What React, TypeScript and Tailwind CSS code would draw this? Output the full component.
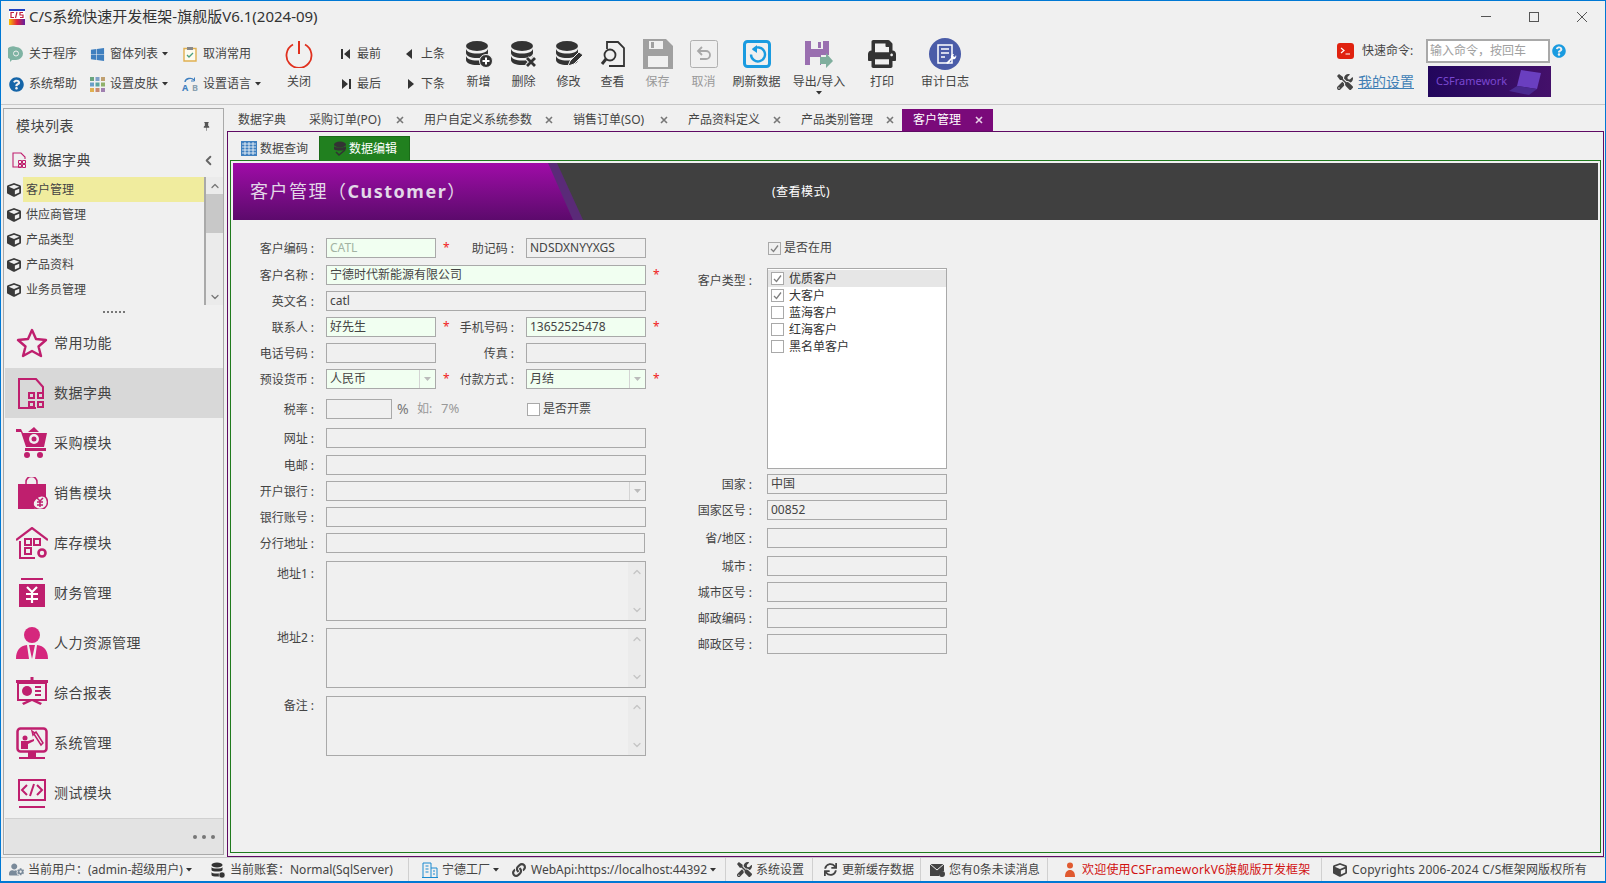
import React from "react";
import { ChevronDown, ChevronLeft, ChevronUp } from "lucide-react";
import {
  FaCube,
  FaLink,
  FaPrint,
  FaQuestionCircle,
  FaSync,
  FaTools,
  FaUserCog,
  FaWindows,
} from "react-icons/fa";
import { BsPinFill } from "react-icons/bs";

const PINK = "#bf1f6e";

const Caret = ({ className = "" }: { className?: string }) => (
  <svg viewBox="0 0 6 4" className={`w-[6px] h-1 ${className}`}>
    <path d="M0 0h6L3 3.5z" fill="#333" />
  </svg>
);

const MiniBtn = ({ icon, label, caret }: { icon: React.ReactNode; label: string; caret?: boolean }) => (
  <div className="flex items-center h-[30px]">
    <span className="relative w-4 h-4 flex items-center justify-center">{icon}</span>
    <span className="ml-[5px] text-xs text-[#444]">{label}</span>
    {caret && <Caret className="ml-[4px]" />}
  </div>
);

const NavBtn = ({ d, label, w }: { d: string; label: string; w: string }) => (
  <div className={`flex items-center h-[30px] ${w}`}>
    <svg viewBox="0 0 12 12" className="w-3 h-3">
      <path d={d} fill="#333" />
    </svg>
    <span className="ml-[5px] text-xs text-[#444]">{label}</span>
  </div>
);

const BigBtn = ({ icon, label, w, muted }: { icon: React.ReactNode; label: string; w: string; muted?: boolean }) => (
  <div className={`flex flex-col items-center ${w}`}>
    <div className="h-[32px] flex items-center justify-center">{icon}</div>
    <span className={`mt-[4px] text-xs ${muted ? "text-[#999]" : "text-[#444]"}`}>{label}</span>
  </div>
);

const DbIcon = ({ children }: { children?: React.ReactNode }) => (
  <svg viewBox="0 0 28 28" className="w-7 h-7">
    <g fill="#333">
      <ellipse cx="12" cy="6" rx="11" ry="5" />
      <path d="M1 8.5c0 3 5 5 11 5s11-2 11-5v4.5c0 3-5 5-11 5s-11-2-11-5z" />
      <path d="M1 15.5c0 3 5 5 11 5s11-2 11-5v4.5c0 3-5 5-11 5s-11-2-11-5z" />
    </g>
    {children}
  </svg>
);

const NavIcon = ({ children }: { children: React.ReactNode }) => (
  <svg viewBox="0 0 32 32" className="w-8 h-8" fill={PINK}>
    {children}
  </svg>
);

const navItems: { label: string; active?: boolean; icon: React.ReactNode }[] = [
  {
    label: "常用功能",
    icon: (
      <NavIcon>
        <path d="M16 3l4 9 10 1-7.500 6.500L25 29l-9-5-9 5 2.500-9.500L2 13l10-1z" fill="none" stroke={PINK} strokeWidth="2.400" strokeLinejoin="round" />
      </NavIcon>
    ),
  },
  {
    label: "数据字典",
    active: true,
    icon: (
      <NavIcon>
        <path d="M20 31H3V2h17l7 8v5" fill="none" stroke={PINK} strokeWidth="2" />
        <path d="M12 15h7v7h-7zM14 17v3h3v-3zM21 15h7v7h-7zM23 17v3h3v-3zM12 24h7v7h-7zM14 26v3h3v-3zM21 24h7v7h-7zM23 26v3h3v-3z" fillRule="evenodd" />
      </NavIcon>
    ),
  },
  {
    label: "采购模块",
    icon: (
      <NavIcon>
        <path d="M0 2h5l2 4h24l-3 14H10L5 5H0z" />
        <path d="M9 21h21v3H9z" />
        <circle cx="11" cy="28" r="3" />
        <circle cx="24" cy="28" r="3" />
        <circle cx="18" cy="12" r="5" fill="#f0f0f0" />
        <circle cx="18" cy="12" r="2.500" />
        <path d="M12 5l6-5 5 5z" />
      </NavIcon>
    ),
  },
  {
    label: "销售模块",
    icon: (
      <NavIcon>
        <path d="M2 7h28v14a8 8 0 0 0-11 11H2z" />
        <path d="M10 8V5a5 5 0 0 1 11 0v3" fill="none" stroke={PINK} strokeWidth="1.500" />
        <circle cx="24" cy="25" r="7.500" fill="none" stroke={PINK} strokeWidth="1.500" />
        <path d="M21 21l3 3 3-3M21 25h6M21 28h6M24 24v6" fill="none" stroke={PINK} strokeWidth="1.500" />
      </NavIcon>
    ),
  },
  {
    label: "库存模块",
    icon: (
      <NavIcon>
        <path d="M0 13L16 1l16 12" fill="none" stroke={PINK} strokeWidth="2.200" />
        <path d="M4 14v17h15" fill="none" stroke={PINK} strokeWidth="2" />
        <path d="M9 12h6v6H9zM18 12h6v6h-6zM9 21h6v6H9z" fill="none" stroke={PINK} strokeWidth="2" />
        <circle cx="26" cy="26" r="3.500" fill="none" stroke={PINK} strokeWidth="2.600" />
      </NavIcon>
    ),
  },
  {
    label: "财务管理",
    icon: (
      <NavIcon>
        <path d="M5 1h22v2H5z" />
        <path d="M3 7h26v23H3z" />
        <path d="M11 10l5 5 5-5M10 17h12M10 22h12M16 15v11" fill="none" stroke="#fff" strokeWidth="2.200" />
      </NavIcon>
    ),
  },
  {
    label: "人力资源管理",
    icon: (
      <NavIcon>
        <circle cx="16" cy="8" r="8" fill="#d5277d" />
        <path d="M0 32c0-9 4-13 11-14l2 14zM32 32c0-9-4-13-11-14l-2 14zM13 18h6l-3 14z" fill="#d5277d" />
      </NavIcon>
    ),
  },
  {
    label: "综合报表",
    icon: (
      <NavIcon>
        <path d="M14.500 0h3v3h-3zM0 3h32v3H0z" />
        <path d="M2 6h28v17H2z" fill="none" stroke={PINK} strokeWidth="2" />
        <path d="M6 26l9-4h2l9 4-1.500 2L16 24l-8.500 4z" />
        <circle cx="11" cy="14" r="5" />
        <path d="M19 9h6v2h-6zM19 13h6v2h-6zM19 17h6v2h-6z" />
      </NavIcon>
    ),
  },
  {
    label: "系统管理",
    icon: (
      <NavIcon>
        <rect x="1.500" y="1.500" width="29" height="23" rx="3" fill="none" stroke={PINK} strokeWidth="2.500" />
        <path d="M3 32h26v-2H3zM12 25h8v5h-8z" />
        <circle cx="9" cy="11" r="2.500" />
        <path d="M5 14h7l6-2v2l-6 3v5H5z" />
        <path d="M16 4l3 2 1-1 7 11-2 2-7-11-1 1z" fill="none" stroke={PINK} strokeWidth="1.500" />
      </NavIcon>
    ),
  },
  {
    label: "测试模块",
    icon: (
      <NavIcon>
        <path d="M3 3h26v20H3z" fill="none" stroke={PINK} strokeWidth="2" />
        <path d="M3 29h26v2H3z" />
        <path d="M11 8l-5 5 5 5M21 8l5 5-5 5M18 7l-4 12" fill="none" stroke={PINK} strokeWidth="2" />
      </NavIcon>
    ),
  },
];

const tabs = [
  { label: "数据字典", w: "w-[71px]" },
  { label: "采购订单(PO)", w: "w-[115px]", close: "left-[98px]" },
  { label: "用户自定义系统参数", w: "w-[149px]", close: "left-[132px]" },
  { label: "销售订单(SO)", w: "w-[115px]", close: "left-[98px]" },
  { label: "产品资料定义", w: "w-[113px]", close: "left-[96px]" },
  { label: "产品类别管理", w: "w-[112px]", close: "left-[96px]" },
];

const TabClose = ({ className }: { className: string }) => (
  <svg viewBox="0 0 8 8" className={`absolute top-[7px] w-2 h-2 ${className}`}>
    <path d="M1 1l6 6M7 1L1 7" stroke="currentColor" strokeWidth="1.600" />
  </svg>
);

const Label = ({ text, w }: { text: string; w: string }) => (
  <span className={`${w} pt-[2px] text-right text-xs text-[#444] shrink-0`}>
    {text}
    <span className="ml-[3px]">:</span>
  </span>
);

const Star = ({ w }: { w: string }) => (
  <span className={`${w} pl-[7px] text-xs text-[#f02020] leading-none shrink-0`}>*</span>
);

const Input = ({
  w,
  value,
  req,
  select,
  muted,
  ml,
}: {
  w: string;
  value?: string;
  req?: boolean;
  select?: boolean;
  muted?: boolean;
  ml?: string;
}) => (
  <div
    className={`${w} ${ml ?? "ml-3"} h-5 shrink-0 border border-[#a9a9a9] flex items-center text-xs ${
      req ? "bg-[#f1fff1]" : "bg-[#f0f0f0]"
    } ${muted ? "text-[#a3b3a3]" : "text-[#444]"}`}
  >
    <span className="flex-1 pl-[3px] whitespace-nowrap">{value}</span>
    {select && (
      <span className="w-[16px] h-full border-l border-[#d4d4d4] flex items-center justify-center">
        <svg viewBox="0 0 7 4" className="w-[7px] h-1">
          <path d="M0 0h7L3.500 4z" fill="#bbb" />
        </svg>
      </span>
    )}
  </div>
);

const Area = ({ w = "w-[320px]" }: { w?: string }) => (
  <div className={`${w} ml-3 h-[60px] border border-[#a9a9a9] flex justify-end`}>
    <div className="w-[17px] bg-[#ebebeb] flex flex-col justify-between items-center py-[4px]">
      <ChevronUp size={12} color="#c5c5c5" strokeWidth={2.500} />
      <ChevronDown size={12} color="#c5c5c5" strokeWidth={2.500} />
    </div>
  </div>
);

const Check = ({ checked, white }: { checked?: boolean; white?: boolean }) => (
  <span
    className={`w-[13px] h-[13px] shrink-0 border border-[#a9a9a9] flex items-center justify-center ${
      white || !checked ? "bg-white" : "bg-[#f0f0f0]"
    }`}
  >
    {checked && (
      <svg viewBox="0 0 11 11" className="w-[11px] h-[11px]">
        <path d="M2 6l2.500 2.500L9 2.500" fill="none" stroke="#808080" strokeWidth="1.300" />
      </svg>
    )}
  </span>
);

const customerTypes = [
  { label: "优质客户", checked: true, hl: true },
  { label: "大客户", checked: true },
  { label: "蓝海客户" },
  { label: "红海客户" },
  { label: "黑名单客户" },
];

const StatusItem = ({
  icon,
  label,
  w,
  caret,
  red,
  sep,
  wide,
}: {
  icon: React.ReactNode;
  label: string;
  w: string;
  caret?: boolean;
  red?: boolean;
  sep?: boolean;
  wide?: boolean;
}) => (
  <div className={`${w} h-full flex items-center shrink-0 ${sep ? "border-r border-[#d0d0d0]" : ""}`}>
    <span className="w-4 h-4 flex items-center justify-center shrink-0">{icon}</span>
    <span
      className={`ml-[4px] text-xs whitespace-nowrap ${wide ? "tracking-[0.2px]" : ""} ${
        red ? "text-[#d01010]" : "text-[#444]"
      }`}
    >
      {label}
    </span>
    {caret && <Caret className="ml-[3px]" />}
  </div>
);

export default function App() {
  return (
    <div className="w-[1606px] h-[883px] bg-[#f0f0f0] border-x border-t border-b-2 border-[#0078d4] flex flex-col overflow-hidden [font-family:'Noto_Sans','Noto_Sans_CJK_SC',sans-serif]">
      {/* title bar */}
      <div className="h-[31px] flex items-center shrink-0">
        <svg viewBox="0 0 16 16" className="w-4 h-4 ml-2">
          <defs>
            <linearGradient id="logoBar" x1="0" x2="1" y1="0" y2="0">
              <stop offset="0" stopColor="#f7c000" />
              <stop offset="0.500" stopColor="#e02040" />
              <stop offset="1" stopColor="#6020a0" />
            </linearGradient>
          </defs>
          <rect width="16" height="2" fill="#2040c0" />
          <rect y="2" width="16" height="8" fill="#fff" />
          <rect y="10" width="16" height="6" fill="url(#logoBar)" />
          <path d="M5 3.500H2v5h3M8 3l-1.500 6M14 3.500h-3v2.500h3v2.500h-3" fill="none" stroke="#c02040" strokeWidth="1.200" />
        </svg>
        <span className="ml-[4px] text-[15px] text-[#333]">C/S系统快速开发框架-旗舰版V6.1(2024-09)</span>
        <div className="ml-auto flex h-full">
          <div className="w-12 flex items-center justify-center">
            <div className="w-[10px] h-px bg-[#555]" />
          </div>
          <div className="w-12 flex items-center justify-center">
            <div className="w-[10px] h-[10px] border border-[#555]" />
          </div>
          <div className="w-[47px] flex items-center justify-center">
            <svg viewBox="0 0 10 10" className="w-[10px] h-[10px]">
              <path d="M0 0l10 10M10 0L0 10" stroke="#555" />
            </svg>
          </div>
        </div>
      </div>

      {/* ribbon */}
      <div className="h-[73px] shrink-0 border-b border-[#c8c8c8] pt-[6px] pl-[7px] flex">
        <div className="w-[81px] mt-[1px] flex flex-col">
          <MiniBtn
            label="关于程序"
            icon={
              <svg viewBox="0 0 16 16" className="w-4 h-4">
                <path d="M8 1a7 6.500 0 0 1 0 13H4l-2 2v-3a7 6.500 0 0 1 6-12z" fill="#7fb3a3" />
                <circle cx="8" cy="7.500" r="2.500" fill="none" stroke="#f0f0f0" />
              </svg>
            }
          />
          <MiniBtn label="系统帮助" icon={<FaQuestionCircle size={15} color="#1565a8" />} />
        </div>
        <div className="w-[93px] mt-[1px] flex flex-col">
          <MiniBtn label="窗体列表" caret icon={<FaWindows size={15} color="#3f7fbf" />} />
          <MiniBtn
            label="设置皮肤"
            caret
            icon={
              <svg viewBox="0 0 15 15" className="w-[15px] h-[15px]">
                <path d="M0 0h4v4H0z" fill="#6aa57f" />
                <path d="M5.500 0h4v4h-4z" fill="#7f9fc8" />
                <path d="M11 0h4v4h-4z" fill="#c0a070" />
                <path d="M0 5.500h4v4H0z" fill="#6a9fc8" />
                <path d="M5.500 5.500h4v4h-4z" fill="#5aa5a0" />
                <path d="M11 5.500h4v4h-4z" fill="#8fb06a" />
                <path d="M0 11h4v4H0z" fill="#e0b050" />
                <path d="M5.500 11h4v4h-4z" fill="#c88a70" />
                <path d="M11 11h4v4h-4z" fill="#a080b0" />
              </svg>
            }
          />
        </div>
        <div className="w-[92px] mt-[1px] flex flex-col">
          <MiniBtn
            label="取消常用"
            icon={
              <svg viewBox="0 0 14 16" className="w-[14px] h-4">
                <path d="M1 2.500h12V15H1z" fill="#fdfbf0" stroke="#e0b050" strokeWidth="1.400" />
                <path d="M4 1h6v3H4z" fill="#888" />
                <path d="M4 9l2 2 4-4" fill="none" stroke="#4aa080" strokeWidth="1.300" />
              </svg>
            }
          />
          <MiniBtn
            label="设置语言"
            caret
            icon={
              <>
                <svg viewBox="0 0 16 16" className="w-4 h-4">
                  <path d="M3 6a5 4 0 0 1 9-2" fill="none" stroke="#3f7fbf" strokeWidth="1.400" />
                  <path d="M12.500 1.500v3.500H9" fill="none" stroke="#3f7fbf" />
                </svg>
                <span className="absolute left-0 top-[7px] flex w-4 justify-between text-[9px] leading-[9px] font-bold">
                  <span className="text-[#3f7fbf]">A</span>
                  <span className="text-[#8aa0b0]">B</span>
                </span>
              </>
            }
          />
        </div>
        <BigBtn
          w="w-[50px]"
          label="关闭"
          icon={
            <svg viewBox="0 0 28 28" className="w-7 h-7">
              <path d="M8 4.500a12.500 12.500 0 1 0 12 0" fill="none" stroke="#e0301e" strokeWidth="1.800" />
              <path d="M14 1v13" stroke="#e0301e" strokeWidth="2" />
            </svg>
          }
        />
        <div className="w-[64px] mt-[1px] pl-[16px] flex flex-col">
          <NavBtn w="" label="最前" d="M1 1h2v10H1zM10 1v10L4 6z" />
          <NavBtn w="" label="最后" d="M9 1h2v10H9zM2 1v10l6-5z" />
        </div>
        <div className="w-[68px] mt-[1px] pl-[16px] flex flex-col">
          <NavBtn w="" label="上条" d="M8 1v10L2 6z" />
          <NavBtn w="" label="下条" d="M4 1v10l6-5z" />
        </div>
        <BigBtn
          w="w-[45px]"
          label="新增"
          icon={
            <DbIcon>
              <circle cx="21" cy="21" r="6.500" fill="#333" stroke="#f0f0f0" />
              <path d="M21 17.500v7M17.500 21h7" stroke="#fff" strokeWidth="2" />
            </DbIcon>
          }
        />
        <BigBtn
          w="w-[45px]"
          label="删除"
          icon={
            <DbIcon>
              <path d="M17 18l8 8M25 18l-8 8" stroke="#f0f0f0" strokeWidth="5" />
              <path d="M17 18l8 8M25 18l-8 8" stroke="#333" strokeWidth="2.800" />
            </DbIcon>
          }
        />
        <BigBtn
          w="w-[45px]"
          label="修改"
          icon={
            <DbIcon>
              <path d="M13 26l2-5 9-9 4 3-9 9z" fill="#333" stroke="#f0f0f0" />
            </DbIcon>
          }
        />
        <BigBtn
          w="w-[43px]"
          label="查看"
          icon={
            <svg viewBox="0 0 26 28" className="w-[26px] h-7" fill="none" stroke="#333">
              <path d="M7 9V2h11l6 6v18H9" strokeWidth="1.800" />
              <circle cx="10" cy="15" r="5.500" strokeWidth="1.800" />
              <path d="M6 19l-4 5" strokeWidth="3" />
            </svg>
          }
        />
        <BigBtn
          w="w-[47px]"
          muted
          label="保存"
          icon={
            <svg viewBox="0 0 30 30" className="w-[30px] h-[30px]">
              <path d="M0 0h23l7 7v23H0z" fill="#a0a0a0" />
              <path d="M6 2h14v8H6z" fill="#f0f0f0" />
              <path d="M8 3h3v6H8z" fill="#a0a0a0" />
              <path d="M5 17h20v11H5z" fill="#f0f0f0" />
            </svg>
          }
        />
        <BigBtn
          w="w-[45px]"
          muted
          label="取消"
          icon={
            <svg viewBox="0 0 28 28" className="w-7 h-7" fill="none">
              <rect x="0.500" y="0.500" width="27" height="27" rx="2" stroke="#b0b0b0" />
              <path d="M12 7l-4 4 4 4M8 11h8a4 4 0 0 1 0 8h-6" stroke="#a8a8a8" strokeWidth="1.800" />
            </svg>
          }
        />
        <BigBtn
          w="w-[61px]"
          label="刷新数据"
          icon={
            <svg viewBox="0 0 28 28" className="w-7 h-7" fill="none">
              <rect x="1.500" y="1.500" width="25" height="25" rx="3" stroke="#1a9be0" strokeWidth="3" />
              <path d="M10 9.500a7 7 0 1 1-2 5" stroke="#1a9be0" strokeWidth="2.400" />
              <path d="M14 5l-5 4.500 5 3.500z" fill="#1a9be0" />
            </svg>
          }
        />
        <div className="w-[64px] flex flex-col items-center relative">
          <div className="h-[32px] flex items-center justify-center">
            <svg viewBox="0 0 28 28" className="w-7 h-7">
              <path d="M0 1h24v14h-8v10H0z" fill="#9a6fb0" />
              <path d="M6 1h12v8H6z" fill="#f0f0f0" />
              <path d="M13 2h3v6h-3z" fill="#9a6fb0" />
              <path d="M5 17h10v8H5z" fill="#f0f0f0" />
              <path d="M15 17h6v-4l7 8-7 7v-4h-6z" fill="#7fae9d" />
            </svg>
          </div>
          <span className="mt-[4px] text-xs text-[#444] whitespace-nowrap">导出/导入</span>
          <Caret className="mt-[1px]" />
        </div>
        <BigBtn w="w-[62px]" label="打印" icon={<FaPrint size={28} color="#333" />} />
        <BigBtn
          w="w-[64px]"
          label="审计日志"
          icon={
            <svg viewBox="0 0 32 32" className="w-8 h-8">
              <circle cx="16" cy="16" r="16" fill="#4a5ca8" />
              <path d="M9 7h14v18H9z" fill="none" stroke="#fff" strokeWidth="1.500" />
              <path d="M12 11h8M12 15h8M12 19h4" stroke="#fff" strokeWidth="1.500" />
              <path d="M17 25l5-5a3 3 0 0 1 3-4l-1 2 2 1 1-2a3 3 0 0 1-4 4l-4 5z" fill="#fff" />
            </svg>
          }
        />
        <div className="ml-auto mr-[39px] mt-[1px] flex flex-col">
          <div className="flex items-center h-6">
            <span className="w-[17px] h-[16px] rounded-[3px] bg-[#e0220f] flex items-center justify-center">
              <svg viewBox="0 0 12 10" className="w-3 h-[10px]">
                <path d="M1 2l3 2.500L1 7M5.500 8H10" fill="none" stroke="#fff" strokeWidth="1.200" />
              </svg>
            </span>
            <span className="ml-2 w-[64px] text-xs text-[#444]">快速命令:</span>
            <div className="w-[124px] h-6 border-2 border-[#a9a9a9] bg-white flex items-center pl-[2px] text-xs text-[#a0a0a0] whitespace-nowrap">
              输入命令，按回车
            </div>
            <FaQuestionCircle size={14} color="#1a9be0" className="ml-[2px]" />
          </div>
          <div className="flex items-center mt-[3px] h-[31px]">
            <FaTools size={16} color="#444" />
            <span className="ml-[5px] w-[70px] text-sm tracking-[0] text-[#3f7fb5] underline">我的设置</span>
            <div className="w-[123px] h-[31px] bg-linear-to-r from-[#22065c] to-[#44106a] flex items-center justify-between pl-2 pr-[6px]">
              <span className="text-[11px] text-[#7a48d0]">CSFramework</span>
              <svg viewBox="0 0 36 28" className="w-9 h-7">
                <path d="M12 2l20 3-4 16-20-3z" fill="#6a3fc0" />
                <path d="M8 18l20 3-8 6L0 23z" fill="#4a2a90" />
              </svg>
            </div>
          </div>
        </div>
      </div>

      {/* body */}
      <div className="flex-1 flex min-h-0">
        {/* sidebar */}
        <div className="w-[221px] ml-[2px] mt-[3px] mb-[2px] border border-[#a9a9a9] flex flex-col shrink-0">
          <div className="h-[34px] flex items-center justify-between pl-[12px] pr-[12px]">
            <span className="text-sm tracking-[0.500px] text-[#444]">模块列表</span>
            <BsPinFill size={9} color="#555" />
          </div>
          <div className="h-[34px] flex items-center pl-[8px] pr-[7px]">
            <svg viewBox="0 0 16 16" className="w-4 h-4" fill="none" stroke={PINK}>
              <path d="M9 15H1V1h8l4 4v2" strokeWidth="1.100" />
              <path d="M6.500 8.500h3v3h-3zM10.500 8.500h3v3h-3zM6.500 12.500h3v3h-3zM10.500 12.500h3v3h-3z" strokeWidth="1" />
            </svg>
            <span className="ml-[5px] text-sm tracking-[0.500px] text-[#444]">数据字典</span>
            <ChevronLeft size={15} color="#666" strokeWidth={3} className="ml-auto" />
          </div>
          <div className="h-[128px] flex">
            <div className="flex-1 flex flex-col pl-[3px]">
              {["客户管理", "供应商管理", "产品类型", "产品资料", "业务员管理"].map((t, i) => (
                <div key={t} className="h-[25px] flex items-center">
                  <FaCube size={14} color="#3a3a3a" />
                  <span className={`ml-[2px] flex-1 h-full flex items-center pl-[3px] pt-px text-xs text-[#444] ${i === 0 ? "bg-[#f0ec9e]" : ""}`}>
                    {t}
                  </span>
                </div>
              ))}
            </div>
            <div className="w-[19px] border-l-2 border-[#a9a9a9] bg-[#ebebeb] flex flex-col items-center">
              <div className="h-[17px] flex items-center">
                <ChevronUp size={12} color="#777" strokeWidth={2.500} />
              </div>
              <div className="w-full h-[39px] bg-[#c8c8c8]" />
              <div className="mt-auto h-[17px] flex items-center">
                <ChevronDown size={12} color="#777" strokeWidth={2.500} />
              </div>
            </div>
          </div>
          <div className="h-[13px] flex justify-center gap-[2px] pt-[6px]">
            {[0, 1, 2, 3, 4, 5].map((i) => (
              <span key={i} className="w-[2px] h-[2px] bg-[#777]" />
            ))}
          </div>
          <div className="flex flex-col pl-px">
            {navItems.map((n) => (
              <div key={n.label} className={`h-[50px] flex items-center pl-[11px] ${n.active ? "bg-[#d8d8d8]" : ""}`}>
                {n.icon}
                <span className="ml-[6px] text-sm tracking-[0.500px] text-[#444]">{n.label}</span>
              </div>
            ))}
          </div>
          <div className="flex-1 ml-px bg-[#e3e3e3] border-t border-[#d0d0d0] flex items-center justify-end gap-[5px] pr-[8px]">
            {[0, 1, 2].map((i) => (
              <span key={i} className="w-1 h-1 rounded-full bg-[#777]" />
            ))}
          </div>
        </div>

        {/* main */}
        <div className="flex-1 flex flex-col min-w-0 pl-[3px] pr-[1px] pb-0">
          <div className="h-[26px] pt-[4px] flex shrink-0">
            {tabs.map((t) => (
              <div key={t.label} className={`${t.w} relative h-[22px] pl-[11px] flex items-center text-xs text-[#444] whitespace-nowrap`}>
                {t.label}
                {t.close && <TabClose className={`${t.close} text-[#777]`} />}
              </div>
            ))}
            <div className="w-[91px] relative h-[22px] pl-[11px] flex items-center bg-[#7a0a7a] text-xs text-white">
              客户管理
              <TabClose className="left-[73px] text-[#e8d0e8]" />
            </div>
          </div>
          <div className="flex-1 min-h-0 border border-[#5f0a64] pt-[4px] px-[2px] pb-[3px] flex flex-col">
            <div className="h-6 flex shrink-0">
              <div className="w-[89px] pl-[11px] pt-px flex items-center text-xs text-[#444]">
                <svg viewBox="0 0 16 15" className="w-4 h-[15px]">
                  <path d="M0 0h16v15H0z" fill="#3f7fbf" />
                  <path d="M1 3h14M1 6h14M1 9h14M1 12h14M4 1v13M8 1v13M12 1v13" stroke="#fff" strokeWidth="0.800" />
                </svg>
                <span className="ml-[3px]">数据查询</span>
              </div>
              <div className="w-[91px] pl-[13px] pt-px flex items-center bg-[#21801f] border-x border-t border-[#1a6a18] text-xs text-white">
                <svg viewBox="0 0 16 16" className="w-4 h-4">
                  <ellipse cx="7" cy="3.500" rx="6" ry="3" fill="#333" />
                  <path d="M1 5c0 2 12 2 12 0v3c0 2-12 2-12 0z" fill="#333" />
                  <path d="M3 11l3 3 6-5" fill="none" stroke="#333" strokeWidth="1.600" />
                </svg>
                <span>数据编辑</span>
              </div>
            </div>
            <div className="flex-1 min-h-0 border border-[#1f7a1d] p-[2px] flex flex-col">
              {/* banner */}
              <div className="h-[57px] shrink-0 bg-[#404040] relative flex items-center">
                <div className="absolute inset-y-0 left-0 w-[350px] bg-[#5a2a78] [clip-path:polygon(0_0,324px_0,350px_100%,0_100%)]" />
                <div className="absolute inset-y-0 left-0 w-[340px] bg-linear-to-b from-[#a00ba8] to-[#5c0a6c] [clip-path:polygon(0_0,315px_0,340px_100%,0_100%)]" />
                <span className="relative ml-[17px] w-[522px] text-[18px] tracking-[1.500px] text-[#e2d8e8] whitespace-nowrap">
                  客户管理（<b>Customer</b>）
                </span>
                <span className="relative text-xs tracking-[0.5px] text-white">(查看模式)</span>
              </div>
              {/* form */}
              <div className="flex-1 min-h-0 flex pl-[7px] pt-[18px]">
                <div className="w-[440px] flex flex-col shrink-0">
                  <div className="flex items-center">
                    <Label text="客户编码" w="w-[74px]" />
                    <Input w="w-[110px]" value="CATL" req muted />
                    <Star w="w-[20px]" />
                    <Label text="助记码" w="w-[58px]" />
                    <Input w="w-[120px]" value="NDSDXNYYXGS" />
                  </div>
                  <div className="flex items-center mt-[7px]">
                    <Label text="客户名称" w="w-[74px]" />
                    <Input w="w-[320px]" value="宁德时代新能源有限公司" req />
                    <Star w="w-[20px]" />
                  </div>
                  <div className="flex items-center mt-[6px]">
                    <Label text="英文名" w="w-[74px]" />
                    <Input w="w-[320px]" value="catl" />
                  </div>
                  <div className="flex items-center mt-[6px]">
                    <Label text="联系人" w="w-[74px]" />
                    <Input w="w-[110px]" value="好先生" req />
                    <Star w="w-[20px]" />
                    <Label text="手机号码" w="w-[58px]" />
                    <Input w="w-[120px]" value="13652525478" req />
                    <Star w="w-[20px]" />
                  </div>
                  <div className="flex items-center mt-[6px]">
                    <Label text="电话号码" w="w-[74px]" />
                    <Input w="w-[110px]" />
                    <span className="w-[20px] shrink-0" />
                    <Label text="传真" w="w-[58px]" />
                    <Input w="w-[120px]" />
                  </div>
                  <div className="flex items-center mt-[6px]">
                    <Label text="预设货币" w="w-[74px]" />
                    <Input w="w-[110px]" value="人民币" req select />
                    <Star w="w-[20px]" />
                    <Label text="付款方式" w="w-[58px]" />
                    <Input w="w-[120px]" value="月结" req select />
                    <Star w="w-[20px]" />
                  </div>
                  <div className="flex items-center mt-[10px]">
                    <Label text="税率" w="w-[74px]" />
                    <Input w="w-[66px]" />
                    <span className="w-[135px] pl-[5px] flex items-center shrink-0">
                      <span className="w-[20px] text-sm text-[#777]">%</span>
                      <span className="w-[24px] text-xs text-[#999]">如:</span>
                      <span className="text-[13px] text-[#999]">7%</span>
                    </span>
                    <Check />
                    <span className="ml-[3px] text-xs text-[#444]">是否开票</span>
                  </div>
                  <div className="flex items-center mt-[9px]">
                    <Label text="网址" w="w-[74px]" />
                    <Input w="w-[320px]" />
                  </div>
                  <div className="flex items-center mt-[7px]">
                    <Label text="电邮" w="w-[74px]" />
                    <Input w="w-[320px]" />
                  </div>
                  <div className="flex items-center mt-[6px]">
                    <Label text="开户银行" w="w-[74px]" />
                    <Input w="w-[320px]" select />
                  </div>
                  <div className="flex items-center mt-[6px]">
                    <Label text="银行账号" w="w-[74px]" />
                    <Input w="w-[320px]" />
                  </div>
                  <div className="flex items-center mt-[6px]">
                    <Label text="分行地址" w="w-[74px]" />
                    <Input w="w-[319px]" />
                  </div>
                  <div className="flex mt-[8px]">
                    <span className="pt-[3px] flex">
                      <Label text="地址1" w="w-[74px]" />
                    </span>
                    <Area />
                  </div>
                  <div className="flex mt-[7px]">
                    <span className="flex">
                      <Label text="地址2" w="w-[74px]" />
                    </span>
                    <Area />
                  </div>
                  <div className="flex mt-[8px]">
                    <span className="flex">
                      <Label text="备注" w="w-[74px]" />
                    </span>
                    <Area />
                  </div>
                </div>
                <div className="flex flex-col">
                  <div className="h-5 flex items-center pl-[88px]">
                    <Check checked />
                    <span className="ml-[3px] text-xs text-[#444]">是否在用</span>
                  </div>
                  <div className="flex mt-[10px]">
                    <span className="pt-[3px] flex">
                      <Label text="客户类型" w="w-[72px]" />
                    </span>
                    <div className="ml-[15px] w-[180px] h-[201px] border border-[#a9a9a9] bg-white pt-px flex flex-col">
                      {customerTypes.map((c) => (
                        <div key={c.label} className={`h-[17px] flex items-center pl-[3px] ${c.hl ? "bg-[#e6e6e6]" : ""}`}>
                          <Check checked={c.checked} white />
                          <span className="ml-[5px] text-xs text-[#333]">{c.label}</span>
                        </div>
                      ))}
                    </div>
                  </div>
                  <div className="flex items-center mt-[5px]">
                    <Label text="国家" w="w-[72px]" />
                    <Input w="w-[180px]" ml="ml-[15px]" value="中国" />
                  </div>
                  <div className="flex items-center mt-[6px]">
                    <Label text="国家区号" w="w-[72px]" />
                    <Input w="w-[180px]" ml="ml-[15px]" value="00852" />
                  </div>
                  <div className="flex items-center mt-[8px]">
                    <Label text="省/地区" w="w-[72px]" />
                    <Input w="w-[180px]" ml="ml-[15px]" />
                  </div>
                  <div className="flex items-center mt-[8px]">
                    <Label text="城市" w="w-[72px]" />
                    <Input w="w-[180px]" ml="ml-[15px]" />
                  </div>
                  <div className="flex items-center mt-[6px]">
                    <Label text="城市区号" w="w-[72px]" />
                    <Input w="w-[180px]" ml="ml-[15px]" />
                  </div>
                  <div className="flex items-center mt-[6px]">
                    <Label text="邮政编码" w="w-[72px]" />
                    <Input w="w-[180px]" ml="ml-[15px]" />
                  </div>
                  <div className="flex items-center mt-[6px]">
                    <Label text="邮政区号" w="w-[72px]" />
                    <Input w="w-[180px]" ml="ml-[15px]" />
                  </div>
                </div>
              </div>
            </div>
          </div>
        </div>
      </div>

      {/* status bar */}
      <div className="h-[24px] shrink-0 border-t border-[#c8c8c8] flex pl-[7px]">
        <StatusItem w="w-[202px]" label="当前用户：(admin-超级用户)" caret icon={<FaUserCog size={15} color="#7a8a9a" />} />
        <StatusItem
          w="w-[199px]"
          sep
          label="当前账套：Normal(SqlServer)"
          icon={
            <svg viewBox="0 0 14 16" className="w-[14px] h-4">
              <ellipse cx="6" cy="3" rx="5.500" ry="2.500" fill="#333" />
              <path d="M.5 5c0 2 11 2 11 0v3c0 2-11 2-11 0zM.5 10c0 2 11 2 11 0v3c0 2-11 2-11 0z" fill="#333" />
              <circle cx="11" cy="13" r="3" fill="#333" stroke="#f0f0f0" strokeWidth="0.500" />
            </svg>
          }
        />
        <div className="w-[13px]" />
        <StatusItem
          w="w-[89px]"
          label="宁德工厂"
          caret
          icon={
            <svg viewBox="0 0 16 16" className="w-4 h-4" fill="none" stroke="#1a8ad0">
              <path d="M1 15V1h8v14M9 6h6v9M0 15.500h16M3.500 4h3M3.500 7h3M3.500 10h3M11 9h2M11 12h2" />
            </svg>
          }
        />
        <StatusItem w="w-[215px]" sep label="WebApi:https://localhost:44392" caret icon={<FaLink size={14} color="#444" />} />
        <div className="w-[10px]" />
        <StatusItem w="w-[77px]" sep label="系统设置" icon={<FaTools size={15} color="#444" />} />
        <div className="w-[9px]" />
        <StatusItem w="w-[99px]" sep label="更新缓存数据" icon={<FaSync size={13} color="#444" />} />
        <div className="w-[8px]" />
        <StatusItem
          w="w-[119px]"
          sep
          label="您有0条未读消息"
          icon={
            <svg viewBox="0 0 15 14" className="w-[15px] h-[14px]">
              <path d="M0 1h14v7a5 5 0 0 0-5 5H0z" fill="#444" />
              <path d="M0 1l7 6 7-6" fill="none" stroke="#f0f0f0" />
              <circle cx="12" cy="11" r="3" fill="#444" />
            </svg>
          }
        />
        <div className="w-[14px]" />
        <StatusItem
          w="w-[260px]"
          sep
          red
          wide
          label="欢迎使用CSFrameworkV6旗舰版开发框架"
          icon={
            <svg viewBox="0 0 10 15" className="w-[10px] h-[15px]">
              <circle cx="5" cy="3.500" r="3" fill="#e05a30" />
              <path d="M0 15c0-5 2-7 5-7s5 2 5 7z" fill="#e05a30" />
            </svg>
          }
        />
        <div className="w-[10px]" />
        <StatusItem w="w-[260px]" wide label="Copyrights 2006-2024 C/S框架网版权所有" icon={<FaCube size={14} color="#444" />} />
      </div>
    </div>
  );
}
